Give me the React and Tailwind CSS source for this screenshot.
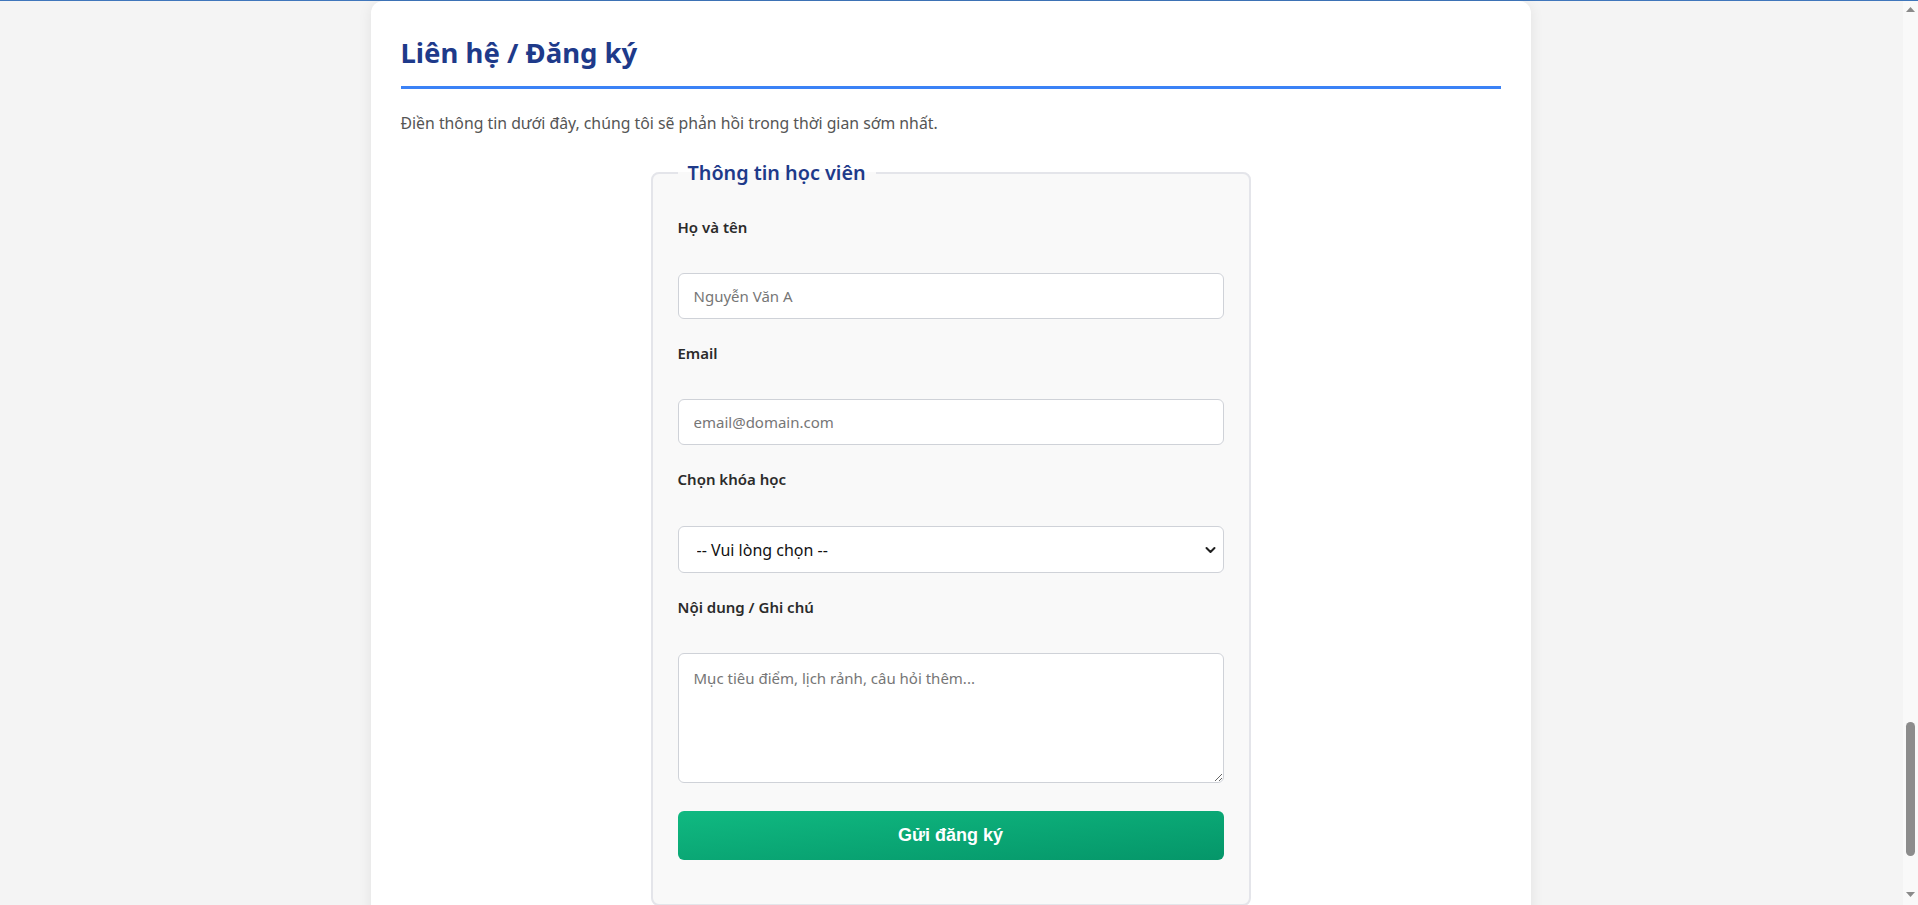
import React from "react";

const FONT = { fontFamily: '"Noto Sans", "Open Sans", Arial, sans-serif' };

function Field({ label, children, className = "" }) {
  return (
    <div className={className}>
      <label className="block h-5 text-[15px] leading-5 font-semibold text-[#2b2b2b]">{label}</label>
      {children}
    </div>
  );
}

export default function App() {
  return (
    <div className="h-[905px] w-full overflow-hidden bg-[#f4f4f4] flex flex-col" style={FONT}>
      <div className="h-px w-full bg-[#3f76bb] shrink-0" />
      <div className="flex flex-1 min-h-0">
        <main className="flex-1 flex justify-center min-w-0 pr-[2px]">
          <div className="w-[1160px] h-[1000px] bg-white rounded-xl shadow-[0_2px_14px_rgba(0,0,0,0.08)] px-[30px] pt-[35px]">
            <h2 className="text-[27.5px] leading-[34px] font-bold text-[#1e3a8a] pb-[16px] border-b-[3px] border-[#3b82f6]">
              Liên hệ / Đăng ký
            </h2>
            <p className="mt-[22px] text-[15.8px] leading-6 text-[#555555]">
              Điền thông tin dưới đây, chúng tôi sẽ phản hồi trong thời gian sớm nhất.
            </p>
            <fieldset className="mt-[24px] mx-auto w-[600px] border-2 border-[#e4e5ea] rounded-lg bg-[#f9f9f9] px-[25px] pt-[30px] pb-[44px]">
              <legend className="px-[10px] text-[19.8px] leading-7 font-semibold text-[#1e3a8a]">
                Thông tin học viên
              </legend>
              <Field label="Họ và tên">
                <input
                  type="text"
                  placeholder="Nguyễn Văn A"
                  className="mt-9 block w-full h-[46px] rounded-md border border-[#cfd2d8] bg-white px-[15px] text-[15px] text-[#222] placeholder:text-[#767676] outline-none"
                />
              </Field>
              <Field label="Email" className="mt-6">
                <input
                  type="email"
                  placeholder="email@domain.com"
                  className="mt-9 block w-full h-[46px] rounded-md border border-[#cfd2d8] bg-white px-[15px] text-[15px] text-[#222] placeholder:text-[#767676] outline-none"
                />
              </Field>
              <Field label="Chọn khóa học" className="mt-6">
                <div className="relative mt-[37px]">
                  <select
                    defaultValue=""
                    className="block w-full h-[47px] appearance-none rounded-md border border-[#cfd2d8] bg-white pl-[18px] pr-8 text-[16px] text-[#111] outline-none"
                  >
                    <option value="">-- Vui lòng chọn --</option>
                  </select>
                  <svg
                    className="absolute right-[8px] top-1/2 -translate-y-1/2 pointer-events-none"
                    width="11"
                    height="8"
                    viewBox="0 0 11 8"
                  >
                    <path d="M1.5 2 L5.5 6 L9.5 2" fill="none" stroke="#1f1f1f" strokeWidth="2" strokeLinecap="round" strokeLinejoin="round" />
                  </svg>
                </div>
              </Field>
              <Field label="Nội dung / Ghi chú" className="mt-6">
                <textarea
                  placeholder="Mục tiêu điểm, lịch rảnh, câu hỏi thêm..."
                  className="mt-9 block w-full h-[130px] rounded-md border border-[#cfd2d8] bg-white px-[15px] py-[13px] text-[15px] leading-[22px] text-[#222] placeholder:text-[#767676] outline-none resize-y"
                />
              </Field>
              <button
                type="button"
                className="mt-[28px] block w-full h-[49px] rounded-md bg-gradient-to-br from-[#10b981] to-[#059669] text-white text-[18px] font-bold"
                style={{ fontFamily: '"Liberation Sans", Arial, sans-serif' }}
              >
                Gửi đăng ký
              </button>
            </fieldset>
          </div>
        </main>
        <div className="w-[15px] shrink-0 bg-[#f9f9f9] flex flex-col items-center">
          <div className="h-[17px] flex items-center justify-center">
            <svg width="9" height="5" viewBox="0 0 9 5">
              <polygon points="4.5,0 9,5 0,5" fill="#8a8a8a" />
            </svg>
          </div>
          <div className="flex-1 flex flex-col justify-end pb-[32px]">
            <div className="w-[9px] h-[134px] rounded-full bg-[#8c8c8c]" />
          </div>
          <div className="h-[17px] flex items-start justify-center pt-[4px]">
            <svg width="9" height="5" viewBox="0 0 9 5">
              <polygon points="0,0 9,0 4.5,5" fill="#8a8a8a" />
            </svg>
          </div>
        </div>
      </div>
    </div>
  );
}
